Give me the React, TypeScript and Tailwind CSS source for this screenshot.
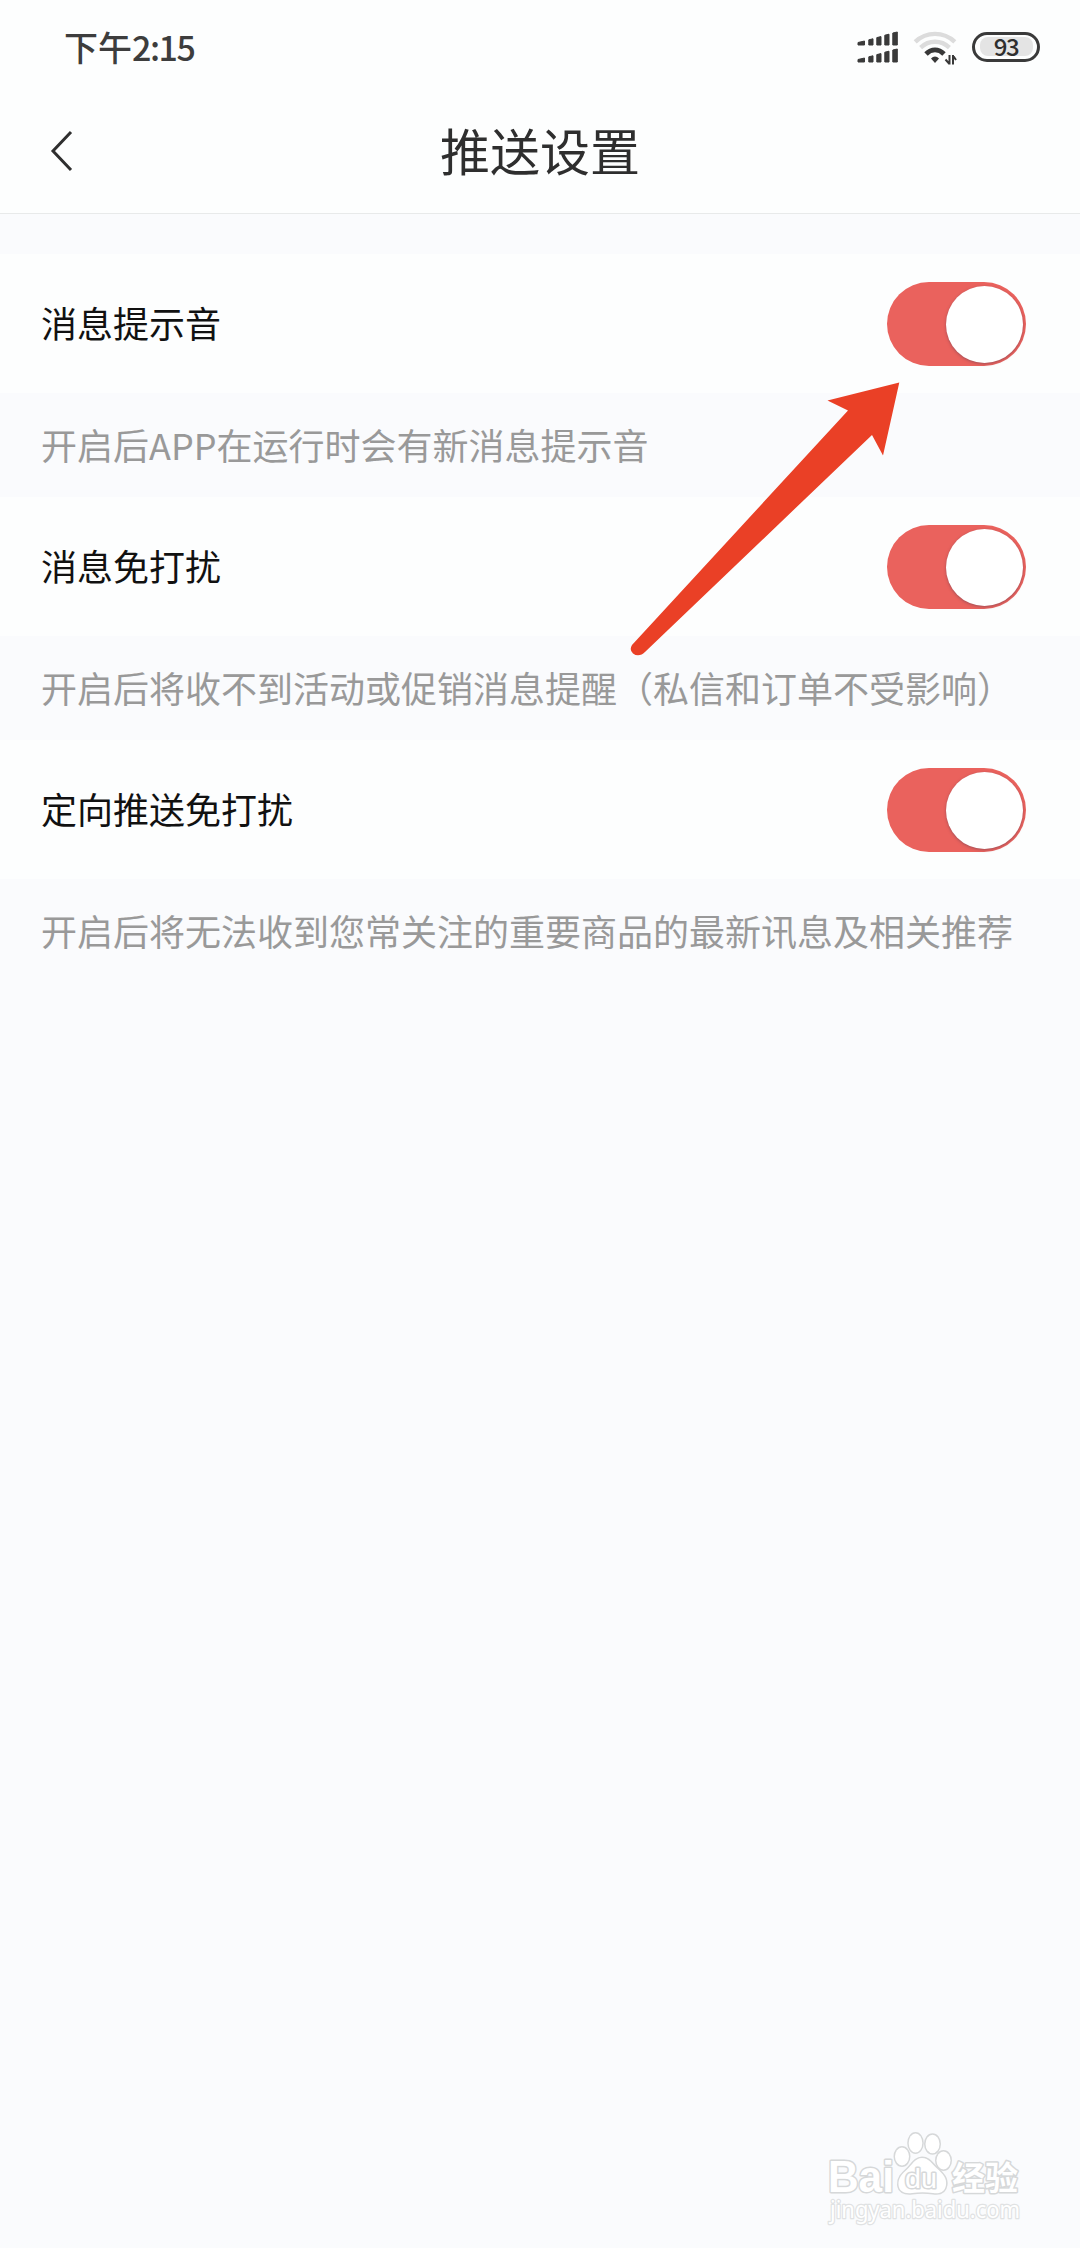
import React, { useState } from 'react';

interface PushSetting {
  id: string;
  title: string;
  description: string;
}

const settings: PushSetting[] = [
  { id: 'sound', title: '消息提示音', description: '开启后APP在运行时会有新消息提示音' },
  { id: 'mute', title: '消息免打扰', description: '开启后将收不到活动或促销消息提醒（私信和订单不受影响）' },
  { id: 'targeted', title: '定向推送免打扰', description: '开启后将无法收到您常关注的重要商品的最新讯息及相关推荐' },
];

const SignalIcon: React.FC = () => (
  <svg width="42" height="34" viewBox="0 0 42 34" fill="#3a3a3a" stroke="#3a3a3a" strokeWidth="1" strokeLinejoin="round">
    {[0.5, 17.5].map(y => (
      <g key={y} transform={`translate(0 ${y})`}>
        <path d="M1 11 7.500 9.500v4H1z" />
        <path d="M11.800 8.300 16 7.300v6.200h-4.200z" />
        <path d="M19.800 6.100 24 5.100v8.400h-4.200z" />
        <path d="M27.800 3.700 32 2.700v10.800h-4.200z" />
        <path d="M35.800 1.500 40.300.5v13h-4.500z" />
      </g>
    ))}
  </svg>
);

const WifiIcon: React.FC = () => (
  <svg width="44" height="34" viewBox="0 0 44 34" fill="none">
    <path d="M2.200 10.800C13.500 .2 30.500 .2 41.800 10.800" stroke="#dcdcdc" strokeWidth="4.400" />
    <path d="M7.600 16.600C16 8.800 28 8.800 36.400 16.600" stroke="#dcdcdc" strokeWidth="4.400" />
    <path d="M13 23C18.400 17.500 25.600 17.500 31 23" stroke="#383838" strokeWidth="4.800" />
    <path d="M18 27.500C20.500 24.800 23.500 24.800 26 27.500L22 32z" fill="#383838" />
    <path d="M36.500 24v9.500M36.500 33l-4-4.500M40 33.500V24M40 24.500l3 4.500" stroke="#383838" strokeWidth="2" />
  </svg>
);

const StatusBar: React.FC = () => (
  <div className="flex h-[95px] items-center justify-between pl-16 pr-[40px]">
    <span className="pb-[2px] text-[34px] font-medium leading-none text-[#3d3d3d]">
      下午<span className="tracking-[-1.500px]">2:15</span>
    </span>
    <div className="flex items-center">
      <SignalIcon />
      <div className="ml-[14px]">
        <WifiIcon />
      </div>
      <div className="mb-[2px] ml-[15px] flex h-[30px] w-[68px] items-center justify-center rounded-full border-[3px] border-[#3a3a3a]">
        <span className="flex h-[19px] w-[53px] items-center justify-center rounded-[8px] bg-[#e4e4e4] pb-[2px] text-[24px] font-medium leading-none tracking-[-1.500px] text-[#2e2e2e]">
          93
        </span>
      </div>
    </div>
  </div>
);

interface SwitchProps {
  checked: boolean;
  onChange: () => void;
}

const Switch: React.FC<SwitchProps> = ({ checked, onChange }) => (
  <button
    role="switch"
    aria-checked={checked}
    onClick={onChange}
    className={`flex h-[84px] w-[139px] items-center rounded-full px-[3.500px] transition ${
      checked ? 'justify-end bg-[#ea625d]' : 'justify-start bg-gray-300'
    }`}
  >
    <span className="size-[77px] rounded-full bg-white shadow-[0_1px_3px_rgba(90,60,80,0.5)]" />
  </button>
);

const PointerArrow: React.FC = () => (
  <svg className="absolute left-[620px] top-[376px]" width="290" height="290" viewBox="620 376 290 290">
    <path
      d="M899.300 382.500 827.500 400.500 848 410.500 632 645Q629 650 633 653.500Q639 658 645.500 651.500L872 435 883 455.500z"
      fill="#ea4026"
    />
  </svg>
);

const Watermark: React.FC = () => (
  <svg
    className="absolute bottom-0 right-0"
    width="280"
    height="138"
    viewBox="0 0 280 138"
    fill="#ffffff"
    stroke="#d6d8d9"
    strokeWidth="3"
    strokeLinejoin="round"
    paintOrder="stroke"
    fontFamily="Liberation Sans, Noto Sans CJK SC, sans-serif"
  >
    <text x="28" y="82" fontSize="44" fontWeight="700" textLength="66" lengthAdjust="spacingAndGlyphs">
      Bai
    </text>
    <text x="152" y="80" fontSize="33" fontWeight="700" textLength="66" lengthAdjust="spacingAndGlyphs">
      经验
    </text>
    <text
      x="30"
      y="108"
      fontSize="23"
      fontFamily="Noto Sans"
      textLength="190"
      lengthAdjust="spacingAndGlyphs"
      stroke="#e0e2e3"
      strokeWidth="2.500"
    >
      jingyan.baidu.com
    </text>
    <ellipse cx="102" cy="46.500" rx="7" ry="9" />
    <ellipse cx="115.500" cy="33" rx="6.800" ry="9.500" />
    <ellipse cx="132.500" cy="34" rx="7" ry="9.200" />
    <ellipse cx="143.500" cy="50.500" rx="7" ry="9" />
    <path d="M122 48C129 48 132 54 137 58.500C143 64 147 68 146 75C145 82 140 84 133 83C126 82 119 82 112 83C104 84 99 81 98.500 75C98 68 102 64 107 59.500C112 55 115 48 122 48z" />
    <text x="105" y="77.500" fontSize="27" textLength="32" lengthAdjust="spacingAndGlyphs">
      du
    </text>
  </svg>
);

export default function App() {
  const [enabled, setEnabled] = useState<Record<string, boolean>>({ sound: true, mute: true, targeted: true });

  const toggle = (id: string) => {
    setEnabled(prev => ({ ...prev, [id]: !prev[id] }));
  };

  return (
    <div className="relative h-[2248px] w-[1080px] overflow-hidden bg-[#fafbfd] font-['Noto_Sans_CJK_SC',sans-serif]">
      {/* Header */}
      <header className="h-[214px] border-b border-[#e8eaea] bg-[#fdfefe]">
        <StatusBar />
        <div className="grid h-[112px] grid-cols-[1fr_auto_1fr] items-center">
          <button aria-label="返回" className="ml-[50px] w-6">
            <svg width="24" height="42" viewBox="0 0 24 42" fill="none" stroke="#2f2f2f" strokeWidth="3">
              <path d="M21 2 3 21 21 40" />
            </svg>
          </button>
          <h1 className="pb-[5px] text-[50px] leading-none text-[#2e2e2e]">推送设置</h1>
        </div>
      </header>

      {/* Settings */}
      <main className="pt-10">
        {settings.map(setting => (
          <section key={setting.id}>
            <div className="flex h-[139px] items-center justify-between bg-[#fdfefe] pl-[41px] pr-[54px] pt-px">
              <h2 className="pb-[5px] text-[36px] leading-none text-[#111111]">{setting.title}</h2>
              <Switch checked={enabled[setting.id]} onChange={() => toggle(setting.id)} />
            </div>
            <p className="flex h-[104px] items-center whitespace-nowrap pb-[2px] pl-[41px] text-[36px] leading-none text-[#999999]">
              {setting.description}
            </p>
          </section>
        ))}
      </main>

      <PointerArrow />
      <Watermark />
    </div>
  );
}
